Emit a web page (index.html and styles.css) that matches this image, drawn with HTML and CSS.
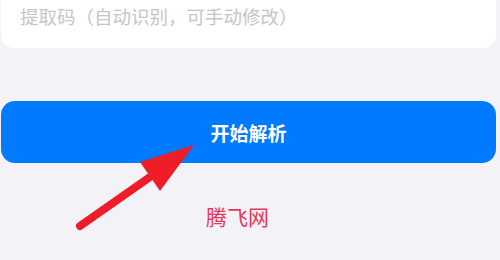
FILE: index.html
```html
<!DOCTYPE html>
<html>
<head>
<meta charset="utf-8">
<link rel="stylesheet" href="styles.css">
</head>
<body>
<div class="page">
  <div class="card">
    <div class="placeholder">提取码（自动识别，可手动修改）</div>
  </div>
  <button class="btn">开始解析</button>
  <div class="brand">腾飞网</div>
  <svg class="arrow" width="500" height="260" viewBox="0 0 500 260">
    <line x1="80" y1="226" x2="160" y2="170" stroke="#ee1d27" stroke-width="8" stroke-linecap="round"/>
    <polygon points="140,162 194,145 160,191" fill="#ee1d27"/>
  </svg>
</div>
</body>
</html>
```
FILE: styles.css
```css
html, body {
  margin: 0;
  padding: 0;
  background: #f2f2f7;
}
.page {
  position: relative;
  width: 500px;
  height: 260px;
  overflow: hidden;
  font-family: "Noto Sans CJK SC", "Noto Sans", sans-serif;
}
.card {
  margin: -20px 4px 0 1px;
  height: 68px;
  background: #ffffff;
  border-radius: 0 0 13px 13px;
  box-sizing: border-box;
  padding: 23px 0 0 19px;
}
.placeholder {
  font-size: 18.5px;
  line-height: 26px;
  color: #c5c5c8;
}
.btn {
  display: block;
  margin: 53px 4px 0 1px;
  width: 495px;
  height: 62px;
  border: none;
  border-radius: 14px;
  background: #007aff;
  color: #ffffff;
  font-family: "Noto Sans CJK SC", "Noto Sans", sans-serif;
  font-size: 19px;
  font-weight: 700;
  padding: 0;
}
.brand {
  margin-top: 38px;
  padding-left: 206px;
  font-size: 21px;
  line-height: 30px;
  color: #e8385a;
}
.arrow {
  position: absolute;
  left: 0;
  top: 0;
}
```
